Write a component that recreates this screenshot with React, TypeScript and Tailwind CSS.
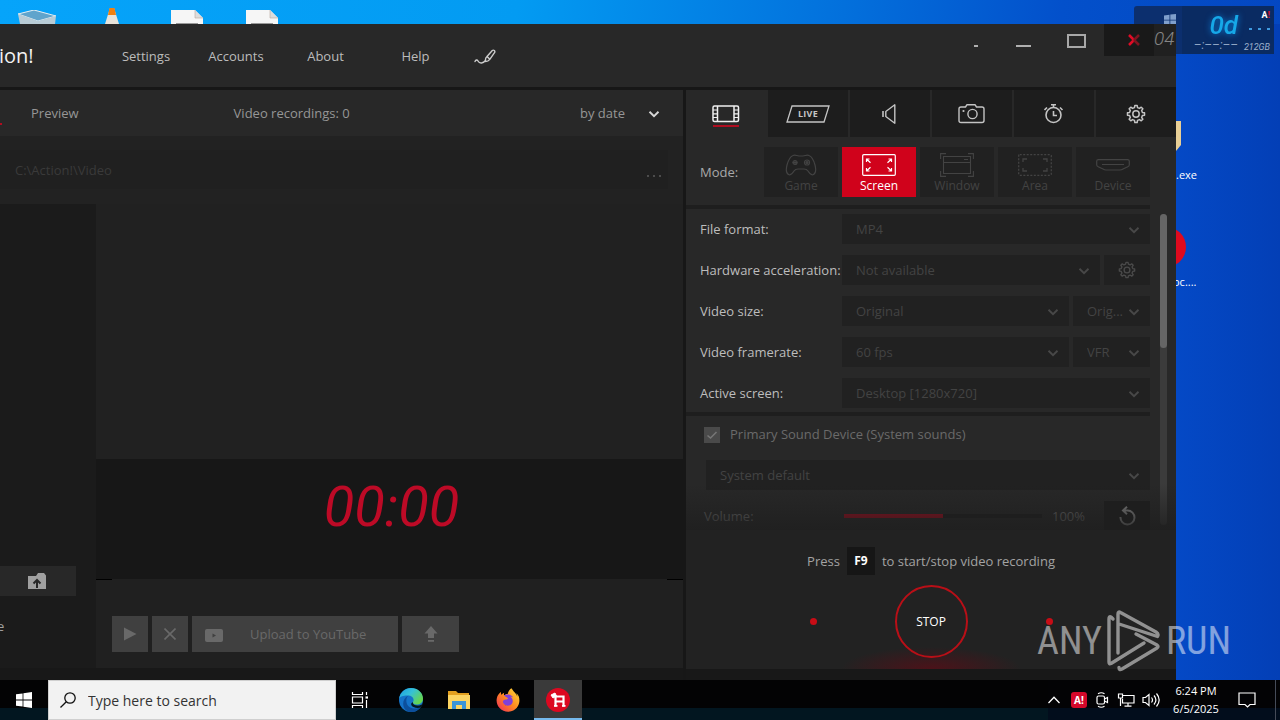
import React from "react";
import { FaFirefoxBrowser } from "react-icons/fa6";

type IconProps = { className?: string };

function gearPath(teeth: number, outer: number, inner: number, c: number) {
  const step = (Math.PI * 2) / teeth;
  const at = (r: number, a: number) =>
    `${(c + r * Math.cos(a)).toFixed(2)} ${(c + r * Math.sin(a)).toFixed(2)}`;
  let d = "";
  for (let i = 0; i < teeth; i++) {
    const a = i * step - Math.PI / 2;
    d += `${i ? "L" : "M"}${at(inner, a - step * 0.3)}L${at(outer, a - step * 0.17)}`;
    d += `L${at(outer, a + step * 0.17)}L${at(inner, a + step * 0.3)}`;
  }
  return d + "Z";
}

function GearIcon({ className }: IconProps) {
  return (
    <svg viewBox="0 0 20 20" className={className} fill="none" stroke="currentColor" strokeWidth="1.500" strokeLinejoin="round">
      <path d={gearPath(8, 8.6, 6.6, 10)} />
      <circle cx="10" cy="10" r="3.2" />
    </svg>
  );
}

function Chevron({ className }: IconProps) {
  return (
    <svg viewBox="0 0 12 12" className={className} fill="none" stroke="currentColor" strokeWidth="1.900">
      <path d="M1.500 3.800 6 8.200l4.500-4.400" />
    </svg>
  );
}

function FilmIcon() {
  return (
    <svg viewBox="0 0 28 18" className="h-[18px] w-7" fill="none" stroke="currentColor" strokeWidth="1.500">
      <rect x="1" y="1" width="25.500" height="15.500" rx="1.500" />
      <path d="M5.500 1v15.500M22 1v15.500" />
      <path d="M1 5h4.500M1 8.800h4.500M1 12.500h4.500M22 5h4.500M22 8.800h4.500M22 12.500h4.500" strokeWidth="1.200" />
    </svg>
  );
}

function LiveIcon() {
  return (
    <span className="relative flex h-[18px] w-11 items-center justify-center">
      <svg viewBox="0 0 44 18" className="absolute inset-0 h-[18px] w-11" fill="none" stroke="currentColor" strokeWidth="1.300">
        <path d="M6 1h37l-5 16H1z" />
      </svg>
      <span className="text-[9px] font-bold tracking-wide">LIVE</span>
    </span>
  );
}

function SoundIcon() {
  return (
    <svg viewBox="0 0 16 20" className="h-5 w-4" fill="none" stroke="currentColor" strokeWidth="1.400">
      <path d="M1 7v6" strokeWidth="1.600" />
      <path d="M3.800 7.500 12.800.8v18.400L3.800 12.500z" strokeLinejoin="round" />
    </svg>
  );
}

function CameraIcon() {
  return (
    <svg viewBox="0 0 28 20" className="h-5 w-7" fill="none" stroke="currentColor" strokeWidth="1.400" strokeLinejoin="round">
      <path d="M3 3H7.500l1.500-2.300h8L18.500 3H24q2 0 2 2V16.500q0 2-2 2H3q-2 0-2-2V5q0-2 2-2z" />
      <circle cx="14.500" cy="10" r="4.600" />
      <circle cx="5.500" cy="7" r="1.100" fill="currentColor" stroke="none" />
    </svg>
  );
}

function TimerIcon() {
  return (
    <svg viewBox="0 0 20 20" className="h-5 w-5" fill="none" stroke="currentColor" strokeWidth="1.600">
      <circle cx="9.500" cy="11" r="7.500" />
      <path d="M9.500 7V11.500H13M9.500 3.500V1M7 .8h5M.5 6 3 3.500M18.500 6 16 3.500" />
    </svg>
  );
}

function GameIcon() {
  return (
    <svg viewBox="0 0 32 22" className="h-[22px] w-8" fill="none" stroke="currentColor" strokeWidth="1.200">
      <path d="M8 1.500c2-1 4 .5 8 .5s6-1.500 8-.5c3 1.200 4.500 4 6 9.500 1 4 1.500 8-1.500 9.500-2.500 1.300-4-1-5.500-3.500-1-1.500-2-2-4-2h-6c-2 0-3 .5-4 2C7.500 19.500 6 21.800 3.500 20.500c-3-1.500-2.500-5.500-1.500-9.500C3.500 5.500 5 2.700 8 1.500z" />
      <circle cx="10" cy="8.500" r="2" />
      <circle cx="22" cy="8.500" r="2.500" />
      <circle cx="22" cy="8.500" r="1" fill="currentColor" />
      <path d="M7.500 8.500h5M10 6v5" />
    </svg>
  );
}

function ScreenIcon() {
  return (
    <svg viewBox="0 0 34 22" className="h-[22px] w-[34px]" fill="none" stroke="currentColor" strokeWidth="1.200">
      <rect x=".7" y=".7" width="32.600" height="20.600" rx="1" />
      <path d="M4.500 8V5h3M4.500 5l4 3.800M29.500 8V5h-3M29.500 5l-4 3.800M4.500 14v3h3M4.500 17l4-3.800M29.500 14v3h-3M29.500 17l-4-3.800" />
    </svg>
  );
}

function WindowIcon() {
  return (
    <svg viewBox="0 0 34 24" className="h-6 w-[34px]" fill="none" stroke="currentColor" strokeWidth="1.100">
      <path d="M.6 6V.6H6M28 .6h5.400V6M.6 18v5.400H6M28 23.400h5.400V18" />
      <path d="M3.500 3.500h27v17h-27zM3.500 9.500h27M24 6.500h4" />
    </svg>
  );
}

function AreaIcon() {
  return (
    <svg viewBox="0 0 34 22" className="h-[22px] w-[34px]" fill="none" stroke="currentColor" strokeWidth="1.300">
      <rect x=".7" y=".7" width="32.600" height="20.600" rx="1" strokeDasharray="2 1.500" />
      <path d="M5 8V5h4M25 5h4v3M5 14v3h4M25 17h4v-3" />
    </svg>
  );
}

function DeviceIcon() {
  return (
    <svg viewBox="0 0 34 12" className="h-3 w-[34px]" fill="none" stroke="currentColor" strokeWidth="1.200" strokeLinejoin="round">
      <path d="M2.500.7h29q1.800 0 1.800 1.500v3.500q0 1.500-1.500 2L27 10q-1.500 1-3 1H10q-1.500 0-3-1L2.200 7.700q-1.500-.5-1.500-2V2.200Q.7.700 2.500.7zM6 5.500h22" />
    </svg>
  );
}

function BrushIcon() {
  return (
    <svg viewBox="0 0 22 16" className="h-4 w-[22px]" fill="none" stroke="currentColor" strokeWidth="1.400" strokeLinecap="round" strokeLinejoin="round">
      <path d="M1 12.500c.8-2 2.200-2 3-.5s1.500 2.200 3.500 2c1.800-.2 2.800-1 3.800-2.200" />
      <path d="M11.500 12.500c-.3-2 .3-4 1.500-5l2.800 2.800c-1 1.400-2.500 2.200-4.300 2.200zM13 7.500 18.300 1.500q1-.8 2 .1t.2 2L15.800 10.300" />
    </svg>
  );
}

const tabs = [
  { name: "Video recording", icon: <FilmIcon /> },
  { name: "Live streaming", icon: <LiveIcon /> },
  { name: "Audio recording", icon: <SoundIcon /> },
  { name: "Screenshots", icon: <CameraIcon /> },
  { name: "Timer", icon: <TimerIcon /> },
  { name: "Options", icon: <GearIcon className="h-5 w-5" /> },
];

const modes = [
  { name: "Game", icon: <GameIcon /> },
  { name: "Screen", icon: <ScreenIcon /> },
  { name: "Window", icon: <WindowIcon /> },
  { name: "Area", icon: <AreaIcon /> },
  { name: "Device", icon: <DeviceIcon /> },
];

function Picker({ id, label, value, className }: { id: string; label?: string; value: string; className: string }) {
  return (
    <div className={`relative h-[30px] ${className}`}>
      <select
        id={id}
        aria-label={label}
        disabled
        className="h-full w-full appearance-none bg-[#212121] pt-[2px] pr-6 pl-[14px] text-[#434343] opacity-100"
      >
        <option>{value}</option>
      </select>
      <Chevron className="pointer-events-none absolute top-[10px] right-[10px] h-3 w-3 text-[#484848]" />
    </div>
  );
}

function SettingRow({ id, label, children }: { id: string; label: string; children: React.ReactNode }) {
  return (
    <div className="flex h-[30px] items-center">
      <label htmlFor={id} className="w-[142px] shrink-0 pt-[2px] whitespace-nowrap text-[#bdbdbd]">
        {label}
      </label>
      <div className="flex flex-1 gap-1">{children}</div>
    </div>
  );
}

function RecorderPanel() {
  return (
    <section className="flex w-[490px] shrink-0 flex-col bg-[#282828]">
      <nav className="flex h-[47px] gap-[2px]">
        {tabs.map((t, i) => (
          <button
            key={t.name}
            aria-label={t.name}
            className={
              i === 0
                ? "relative flex flex-1 items-center justify-center text-[#f0f0f0]"
                : "flex flex-1 items-center justify-center bg-[#1d1d1d] text-[#c4c4c4]"
            }
          >
            {t.icon}
            {i === 0 && <span className="absolute bottom-[10px] h-[2px] w-[26px] bg-[#b00d20]" />}
          </button>
        ))}
      </nav>
      <div className="flex items-start pt-[10px] pr-[26px] pb-2 pl-[14px]">
        <span className="w-16 leading-[50px] text-[#a8a8a8]">Mode:</span>
        <div className="flex flex-1 gap-1">
          {modes.map((m) => (
            <button
              key={m.name}
              className={
                m.name === "Screen"
                  ? "flex h-[50px] flex-1 flex-col items-center bg-[#d0021b] pt-[6px] text-[12px] text-white"
                  : "flex h-[50px] flex-1 flex-col items-center bg-[#212121] pt-[6px] text-[12px] text-[#434343]"
              }
            >
              <span className="flex h-6 items-center">{m.icon}</span>
              <span className="leading-[18px]">{m.name}</span>
            </button>
          ))}
        </div>
      </div>
      <div className="mr-[26px] h-1 bg-[#1e1e1e]" />
      <div className="relative flex h-[321px] overflow-hidden">
        <div className="flex-1">
          <div className="flex flex-col gap-[11px] pt-[5px] pb-1 pl-[14px]">
            <SettingRow id="format" label="File format:">
              <Picker id="format" value="MP4" className="flex-1" />
            </SettingRow>
            <SettingRow id="accel" label="Hardware acceleration:">
              <Picker id="accel" value="Not available" className="flex-1" />
              <button aria-label="Acceleration options" disabled className="flex w-[46px] items-center justify-center bg-[#212121] text-[#4a4a4a]">
                <GearIcon className="h-[18px] w-[18px]" />
              </button>
            </SettingRow>
            <SettingRow id="size" label="Video size:">
              <Picker id="size" value="Original" className="flex-1" />
              <Picker id="aspect" label="Aspect" value="Orig..." className="w-[77px]" />
            </SettingRow>
            <SettingRow id="rate" label="Video framerate:">
              <Picker id="rate" value="60 fps" className="flex-1" />
              <Picker id="ratemode" label="Framerate mode" value="VFR" className="w-[77px]" />
            </SettingRow>
            <SettingRow id="screen" label="Active screen:">
              <Picker id="screen" value="Desktop [1280x720]" className="flex-1" />
            </SettingRow>
          </div>
          <div className="h-1 bg-[#1e1e1e]" />
          <label className="flex h-[37px] items-center gap-[10px] pl-[18px] text-[#6a6a6a]">
            <span className="relative flex h-4 w-4 items-center justify-center">
              <input type="checkbox" defaultChecked className="h-4 w-4 appearance-none bg-[#4a4a4a]" />
              <svg viewBox="0 0 16 16" className="pointer-events-none absolute inset-0 h-4 w-4" fill="none" stroke="#767676" strokeWidth="1.600">
                <path d="m3.500 8.500 3 2.500 6-6" />
              </svg>
            </span>
            Primary Sound Device (System sounds)
          </label>
          <div className="mt-[7px] pl-5">
            <Picker id="device" label="Sound device" value="System default" className="w-full" />
          </div>
          <div className="mt-[11px] flex h-[30px] items-center pl-[18px] text-[#6a6a6a]">
            <label htmlFor="volume" className="w-[140px] pt-[2px]">Volume:</label>
            <input
              id="volume"
              type="range"
              defaultValue={50}
              className="h-1 w-[198px] appearance-none bg-linear-to-r from-[#a00c1e] from-50% to-[#1e1e1e] to-50% [&::-webkit-slider-thumb]:h-0 [&::-webkit-slider-thumb]:w-0 [&::-webkit-slider-thumb]:appearance-none"
            />
            <output htmlFor="volume" className="ml-[10px] flex-1 pt-[2px]">100%</output>
            <button aria-label="Reset volume" className="flex h-[30px] w-[46px] items-center justify-center bg-[#1e1e1e] text-[#8c8c8c]">
              <svg viewBox="0 0 20 20" className="h-5 w-5" fill="none" stroke="currentColor" strokeWidth="2">
                <path d="M3.500 11A7 7 0 1 0 10.500 4.500H6.500M10 .8 6 4.500l4 3.700" />
              </svg>
            </button>
          </div>
        </div>
        <div className="mt-[5px] mr-[9px] mb-[5px] ml-[10px] w-[7px] rounded bg-[#3b3b3b]">
          <div className="h-[134px] rounded bg-[#656565]" />
        </div>
        <div className="pointer-events-none absolute inset-x-0 bottom-0 h-[46px] bg-linear-to-b from-[#1e1e1e]/0 to-[#1e1e1e]/80" />
      </div>
      <div className="flex flex-1 flex-col items-center bg-[radial-gradient(ellipse_90px_22px_at_50%_100%,#4c1219,#222222)] pt-[17px] pb-[11px]">
        <p className="flex h-7 items-center gap-[7px] text-[#a3a3a3]">
          <span className="pt-[2px]">Press</span>
          <kbd className="flex h-7 w-7 items-center justify-center bg-[#161616] font-['Open_Sans',sans-serif] text-[12px] font-bold text-white">F9</kbd>
          <span className="pt-[2px]">to start/stop video recording</span>
        </p>
        <div className="mt-[10px] flex items-center gap-[78px]">
          <span className="h-[7px] w-[7px] rounded-full bg-[#c80d16]" />
          <button className="h-[73px] w-[73px] rounded-full border-2 border-[#b90f17] text-[12px] text-white">STOP</button>
          <span className="h-[7px] w-[7px] rounded-full bg-[#c80d16]" />
        </div>
      </div>
      <div className="h-[11px] bg-[#181818]" />
    </section>
  );
}

function LibraryPanel() {
  return (
    <section className="flex min-w-0 flex-1 flex-col border-r-[3px] border-[#171717] bg-[#202020]">
      <div className="flex h-[46px] items-center bg-[#282828] pt-[2px] text-[#969696]">
        <a href="#list" className="w-[31px] self-stretch" aria-label="List">
          <span className="mt-[31px] block h-[2px] w-[2px] bg-[#b00d20]" />
        </a>
        <a href="#preview">Preview</a>
        <span className="flex-1 pl-[155px]">Video recordings: 0</span>
        <button className="flex items-center gap-[23px] pr-[23px]">
          by date
          <Chevron className="h-3 w-3 text-[#d8d8d8]" />
        </button>
      </div>
      <div className="bg-[#222222] pt-[14px] pr-[15px] pb-[15px]">
        <div className="flex h-[39px] items-center bg-[#202020] text-[#3a3a3a]">
          <input aria-label="Folder" defaultValue="C:\Action!\Video" className="h-full min-w-0 flex-1 bg-transparent pl-[15px] outline-none" />
          <button aria-label="Browse" className="flex items-end gap-1 self-end pr-[7px] pb-3">
            <span className="h-[2px] w-[2px] bg-[#4c4c4c]" />
            <span className="h-[2px] w-[2px] bg-[#4c4c4c]" />
            <span className="h-[2px] w-[2px] bg-[#4c4c4c]" />
          </button>
        </div>
      </div>
      <div className="flex flex-1">
        <aside className="flex w-24 flex-col justify-end bg-[#1b1b1b] pb-8">
          <button aria-label="Move up" className="flex h-[30px] w-[76px] items-center bg-[#282828] pl-7">
            <svg viewBox="0 0 18 16" className="h-4 w-[18px]">
              <path d="M0 3h8l2-3h6l2 2.500V16H0z" fill="#a0a0a0" />
              <path d="M9 15V7M5.500 10.500 9 7l3.500 3.500" fill="none" stroke="#282828" strokeWidth="2" />
            </svg>
          </button>
          <span className="mt-5 h-5 -indent-[3px] leading-5 text-[#a0a0a0]">e</span>
        </aside>
        <div className="flex flex-1 flex-col">
          <div className="flex-1 bg-[#212121]" />
          <div className="flex h-[120px] items-start justify-center bg-[#171717] pt-5 pl-1">
            <time className="font-['Roboto',sans-serif] text-[56px] leading-[56px] text-[#bd0a26] italic">00:00</time>
          </div>
          <div className="flex h-px justify-between">
            <span className="w-4 bg-black" />
            <span className="w-4 bg-black" />
          </div>
          <div className="flex gap-1 px-4 pt-9 pb-4 text-[#696969]">
            <button aria-label="Play" className="flex h-9 w-9 items-center justify-center bg-[#404040]">
              <svg viewBox="0 0 14 14" className="h-[14px] w-[14px]" fill="currentColor">
                <path d="M1 .5v13l12.500-6.500z" />
              </svg>
            </button>
            <button aria-label="Delete" className="flex h-9 w-9 items-center justify-center bg-[#404040]">
              <svg viewBox="0 0 12 12" className="h-3 w-3" fill="none" stroke="currentColor" strokeWidth="1.600">
                <path d="m.5.5 11 11M11.500.5l-11 11" />
              </svg>
            </button>
            <button className="flex h-9 w-[206px] items-center bg-[#404040] pt-[2px] pl-[13px]">
              <svg viewBox="0 0 18 13" className="mr-[27px] h-[13px] w-[18px]">
                <rect width="18" height="13" rx="2" fill="currentColor" />
                <path d="m7.500 4.500 3.500 2-3.500 2z" fill="#404040" />
              </svg>
              Upload to YouTube
            </button>
            <button aria-label="Export" className="flex h-9 w-[57px] items-center justify-center bg-[#404040]">
              <svg viewBox="0 0 14 16" className="h-4 w-[14px]" fill="currentColor">
                <path d="M7 0 .5 7.500H4V12h6V7.500h3.500zM4 14h6v1.800H4z" />
              </svg>
            </button>
          </div>
        </div>
      </div>
      <div className="h-3 bg-[#181818]" />
    </section>
  );
}

function TitleBar() {
  return (
    <header className="flex h-[66px] items-center border-b-[3px] border-[#171717] bg-[#282828] text-[#bcbcbc]">
      <h1 className="w-[100px] text-[20px] leading-6 text-[#f2f2f2]">
        <span className="-ml-px">ion!</span>
      </h1>
      <nav className="flex flex-1 items-center pt-[2px]">
        <a href="#settings" className="w-[92px] text-center">Settings</a>
        <a href="#accounts" className="w-[88px] text-center">Accounts</a>
        <a href="#about" className="w-[91px] text-center">About</a>
        <a href="#help" className="w-[89px] text-center">Help</a>
        <button aria-label="Draw" className="ml-[14px] text-[#cccccc]">
          <BrushIcon />
        </button>
      </nav>
      <div className="flex self-start">
        <button aria-label="Dock" className="flex h-8 w-[10px] items-center">
          <span className="mt-[11px] h-[2px] w-1 bg-[#b0b0b0]" />
        </button>
        <button aria-label="Minimize" className="flex h-8 w-[66px] items-center justify-center pl-3">
          <span className="mt-[11px] h-[2px] w-[15px] bg-[#b0b0b0]" />
        </button>
        <button aria-label="Maximize" className="flex h-8 w-[54px] items-center pl-[17px]">
          <span className="mt-[2px] h-[14px] w-[19px] border-2 border-[#a8a8a8]" />
        </button>
        <button aria-label="Close" className="flex h-8 w-[50px] items-center bg-[#191919] pl-6">
          <svg viewBox="0 0 12 12" className="h-3 w-3" fill="none" strokeWidth="2.500">
            <path d="M6 6 1 1M6 6l-5 5" stroke="#e00c26" />
            <path d="m6 6 5-5M6 6l5 5" stroke="#801420" />
          </svg>
        </button>
        <span className="w-[22px] bg-[#202020] pt-1 font-['Roboto',sans-serif] text-[19px] leading-[22px] font-light text-[#858585] italic">04</span>
      </div>
    </header>
  );
}

function RecordingOverlay() {
  return (
    <div className="absolute top-[6px] right-[6px] h-12 w-[140px] rounded-[3px] bg-[#0c2f6e]">
      <svg viewBox="0 0 12 12" className="absolute top-2 left-[30px] h-3 w-3" fill="#7f9fcc">
        <path d="M0 1.500 5.500.7v5H0zM6.300.6 12 0v5.700H6.300zM0 6.400h5.500v5L0 10.600zM6.300 6.400H12V12l-5.700-.7z" />
      </svg>
      <div className="absolute inset-y-0 right-0 flex w-[92px] bg-[#0a2b62] font-['Roboto',sans-serif] italic">
        <div className="flex w-[60px] flex-col items-end pt-[5px] pr-1">
          <span className="text-[26px] leading-7 font-medium text-[#16a8e8] drop-shadow-[0_0_3px_#0a78d0]">0d</span>
          <span className="text-[12px] leading-3 whitespace-nowrap text-[#8fa5c4]">–:––:––</span>
        </div>
        <div className="flex flex-1 flex-col items-end pt-[3px] pr-1">
          <span className="text-[9px] leading-3 font-bold text-white not-italic">
            A<b className="text-[#d0102a]">!</b>
          </span>
          <span className="mt-[7px] flex gap-[6px]">
            <i className="h-[2px] w-[3px] bg-[#3f9be0]" />
            <i className="h-[2px] w-[3px] bg-[#3f9be0]" />
            <i className="h-[2px] w-[3px] bg-[#3f9be0]" />
          </span>
          <span className="mt-[11px] text-[9px] leading-3 text-[#9fb2cc]">212GB</span>
        </div>
      </div>
    </div>
  );
}

function FileGlyph() {
  return (
    <svg viewBox="0 0 32 14" className="h-[14px] w-8">
      <path d="M0 0h24l8 8v6H0z" fill="#f6f6f6" />
      <path d="M24 0v8h8" fill="#dcdcdc" stroke="#b8a8a0" strokeWidth=".6" />
      <path d="M5 13.500h22" stroke="#999" />
    </svg>
  );
}

function DesktopTop() {
  return (
    <div className="flex h-6 items-end pl-[18px]">
      <svg viewBox="0 0 38 14" className="h-[14px] w-[38px]">
        <path d="M0 4 16 0l22 6-18 5z" fill="#5fa4cc" stroke="#e6eef2" />
        <path d="m0 4 20 7v3H2zM38 6l-18 5v3h17z" fill="#b9ccd6" />
      </svg>
      <svg viewBox="0 0 16 16" className="ml-12 h-4 w-4">
        <path d="M6 0h4l5 16H1z" fill="#e8e3da" />
        <path d="M5.500 0h5l1.500 7H4z" fill="#f08010" />
      </svg>
      <span className="ml-[51px]"><FileGlyph /></span>
      <span className="ml-[43px]"><FileGlyph /></span>
    </div>
  );
}

function DesktopSide() {
  return (
    <div className="w-[104px] shrink-0 bg-linear-to-r from-[#0449c6] to-[#033fb6] pt-[97px] text-[11px] text-white">
      <svg viewBox="0 0 6 30" className="h-[30px] w-[6px]">
        <path d="M0 0h5v24l-5 6z" fill="#e8cf96" />
      </svg>
      <p className="mt-4 leading-4">.exe</p>
      <svg viewBox="0 0 10 40" className="mt-11 h-10 w-[10px]">
        <circle cx="-10" cy="20" r="20" fill="#df0a1e" />
      </svg>
      <p className="mt-[7px] -indent-[3px] leading-4">oc....</p>
    </div>
  );
}

function Watermark() {
  return (
    <div className="pointer-events-none absolute right-[49px] bottom-2 z-20 flex h-[62px] items-center font-['Roboto_Condensed','Roboto',sans-serif] text-[38px] text-white/50">
      <span>ANY</span>
      <svg viewBox="0 0 56 62" className="mx-1 h-[62px] w-14" fill="none" strokeWidth="3.400" strokeLinejoin="round" strokeLinecap="round">
        <g stroke="white" opacity=".5">
          <path d="M7 9 5 7q-2-1-2 2v43q0 2.500 2 1.500L38 33" />
          <path d="M12 43V4q0-3 2.500-1.500L50 22q3 2 1.500 4.500L13 14" />
          <path d="M30 24 51 35q2 1.500 0 3L16 59q-3 1.500-3-1.500" />
        </g>
      </svg>
      <span>RUN</span>
    </div>
  );
}

function Taskbar() {
  return (
    <footer className="flex h-10 items-center bg-[linear-gradient(#030304_0_70%,#021620_70%)] text-white">
      <button aria-label="Start" className="flex h-10 w-12 items-center justify-center">
        <svg viewBox="0 0 16 16" className="h-4 w-4" fill="white">
          <path d="M0 2.300 6.600 1.400v6.200H0zM7.400 1.300 16 0v7.600H7.400zM0 8.400h6.600v6.200L0 13.700zM7.400 8.400H16V16l-8.600-1.200z" />
        </svg>
      </button>
      <label className="flex h-10 w-72 items-center border border-[#cfcfcf] bg-[#f2f2f2] pl-[11px]">
        <svg viewBox="0 0 16 16" className="h-4 w-4" fill="none" stroke="#111" strokeWidth="1.300">
          <circle cx="10" cy="6" r="5.200" />
          <path d="m6.300 9.700-5.800 5.800" />
        </svg>
        <input aria-label="Search" placeholder="Type here to search" className="ml-3 min-w-0 flex-1 bg-transparent text-[14px] outline-none placeholder:text-[#333333]" />
      </label>
      <button aria-label="Task view" className="flex h-10 w-12 items-center justify-center">
        <svg viewBox="0 0 18 16" className="h-4 w-[18px]" fill="none" stroke="white" strokeWidth="1.200">
          <path d="M1.500 0v2.500h10V0M1.500 16v-2.500h10V16M1.500 5h10v6h-10zM15.500 0v3M15.500 8v8" />
          <path d="M14.500 5.500h2.500" strokeWidth="2.200" />
        </svg>
      </button>
      <button aria-label="Edge" className="ml-[3px] flex h-10 w-12 items-center justify-center">
        <svg viewBox="0 0 24 24" className="h-6 w-6">
          <defs>
            <linearGradient id="edgeTop" x1="0" y1="0" x2="1" y2=".6">
              <stop offset="0" stopColor="#1b9de2" />
              <stop offset=".5" stopColor="#35c1d8" />
              <stop offset="1" stopColor="#67d64c" />
            </linearGradient>
          </defs>
          <circle cx="12" cy="12" r="12" fill="#1573c9" />
          <path d="M0 11C1 4.500 6 0 12 0c7 0 12 5 12 10.500 0 4-3 6-6.500 6-2.500 0-4-1-3.500-2.500 1.500-2 .5-6-4.500-6.500C5 7.300 1 8 0 11z" fill="url(#edgeTop)" />
          <path d="M9.500 7.500C6 10 6.500 18 12.500 20c4 1.200 7 .3 9.500-1.500C19 23.500 14 25 9 23.600 3 21 2 11 9.500 7.500z" fill="#0c4f9c" />
          <path d="M14 14c-.8 2 1.500 3.800 5 3.600 2-.1 3.500-.8 5.500-2.600l-2 4c-2 1.300-5.500 1.500-8 0-3-1.500-3-4-.5-5z" fill="#061820" />
        </svg>
      </button>
      <button aria-label="File Explorer" className="flex h-10 w-12 items-center justify-center">
        <svg viewBox="0 0 22 20" className="h-5 w-[22px]">
          <path d="M0 1h8l2 2h11v4H0z" fill="#e3a020" />
          <path d="M0 5h22v14H0z" fill="#fcd462" />
          <path d="M4 11h14v8h-4v-4H8v4H4z" fill="#3a94d8" />
        </svg>
      </button>
      <button aria-label="Firefox" className="ml-px flex h-10 w-12 items-center justify-center">
        <svg className="absolute h-0 w-0">
          <defs>
            <linearGradient id="fox" x1="1" y1="0" x2="0" y2="1">
              <stop offset="0" stopColor="#ffe23c" />
              <stop offset=".5" stopColor="#ff8a20" />
              <stop offset="1" stopColor="#f0245c" />
            </linearGradient>
          </defs>
        </svg>
        <span className="flex h-6 w-6 items-center justify-center rounded-full bg-[radial-gradient(circle,#8040d8_0_35%,transparent_36%)]">
          <FaFirefoxBrowser className="h-6 w-6" fill="url(#fox)" />
        </span>
      </button>
      <button aria-label="Action!" className="ml-[2px] flex h-10 w-12 items-center justify-center border-b-2 border-[#76b9ed] bg-[#3a3a3a] pt-[2px]">
        <svg viewBox="0 0 24 24" className="h-6 w-6">
          <circle cx="12" cy="12" r="12" fill="#dc0820" />
          <path d="M9.500 18.500V8.500h8v10M9.500 13.500h8" fill="none" stroke="white" strokeWidth="2.200" />
          <path d="M5 7 9 5l1.500 3L7 10z" fill="white" stroke="white" strokeWidth="1" />
          <path d="M8 17.800h3.500M16 17.800h3.500" stroke="white" strokeWidth="1.800" />
        </svg>
      </button>
      <div className="ml-auto flex h-10 items-center gap-[7px] bg-[linear-gradient(#030305_0_70%,#020d1c_70%)]">
        <svg viewBox="0 0 12 8" className="mr-1 h-2 w-3" fill="none" stroke="white" strokeWidth="1.300">
          <path d="M.5 7 6 1.300 11.500 7" />
        </svg>
        <span className="flex h-4 w-4 items-center justify-center rounded-[3px] bg-[#d4082a] text-[10px] font-bold">A!</span>
        <svg viewBox="0 0 16 16" className="h-4 w-4" fill="none" stroke="white" strokeWidth="1.200">
          <rect x="3" y="4" width="7.500" height="8" rx="1.500" />
          <path d="m10.500 7 3-1.500v5l-3-1.500M4 1.800c2-1.300 4.500-1.300 6.500 0M4 14.200c2 1.300 4.500 1.300 6.500 0" />
        </svg>
        <svg viewBox="0 0 18 16" className="h-4 w-[18px]" fill="none" stroke="white" strokeWidth="1.200">
          <path d="M6 3.500h11v7.500H5.500V7M1.500 2h4v4h-4zM3.500 6v8M11 11v3M7.500 14.200h7" />
        </svg>
        <svg viewBox="0 0 18 16" className="h-4 w-[18px]" fill="none" stroke="white" strokeWidth="1.200">
          <path d="M1 5.500h2.500L7 2.500v11l-3.500-3H1zM9.500 5.500c1.200 1.500 1.200 3.500 0 5M12 3.500c2.300 2.700 2.300 6.300 0 9M14.500 1.500c3.300 4 3.300 9 0 13" />
        </svg>
        <p className="w-[58px] text-center text-[11px] leading-[18px] whitespace-nowrap">
          6:24 PM
          <br />
          6/5/2025
        </p>
        <button aria-label="Notifications" className="ml-[6px] w-[33px]">
          <svg viewBox="0 0 18 18" className="h-[18px] w-[18px]" fill="none" stroke="white" strokeWidth="1.200">
            <path d="M1 2h16v11.500h-5L9.500 16 7 13.500H1z" />
          </svg>
        </button>
        <span className="mr-1 -ml-[3px] h-10 w-px bg-[#454b58]" />
      </div>
    </footer>
  );
}

export default function App() {
  return (
    <div className="flex min-h-screen flex-col overflow-hidden bg-black font-['Open_Sans','Noto_Sans',sans-serif] text-[13px]">
      <main className="relative flex flex-1 flex-col bg-[linear-gradient(97deg,#06a4fa_0%,#039bf2_38%,#0370dc_62%,#0350cb_78%,#0444be_100%)]">
        <DesktopTop />
        <RecordingOverlay />
        <div className="flex flex-1">
          <div className="relative z-10 flex min-w-0 flex-1 flex-col">
            <TitleBar />
            <div className="flex flex-1">
              <LibraryPanel />
              <RecorderPanel />
            </div>
          </div>
          <DesktopSide />
        </div>
        <Watermark />
      </main>
      <Taskbar />
    </div>
  );
}
